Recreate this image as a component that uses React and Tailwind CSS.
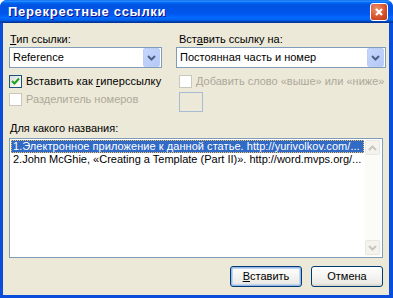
const Checkbox = ({ checked, disabled }) => (
  <div
    className={
      disabled
        ? "w-[13px] h-[13px] border border-[#cac8bb] bg-white shrink-0"
        : "w-[13px] h-[13px] border border-[#1c5180] bg-[linear-gradient(135deg,#dcdcd7,#ffffff)] shrink-0 flex items-center justify-center"
    }
  >
    {checked && (
      <svg width="9" height="9" viewBox="0 0 9 9">
        <path d="M1 4 L3.5 6.5 L8 1.5" stroke="#21a121" strokeWidth="2" fill="none" />
      </svg>
    )}
  </div>
);

const Combo = ({ value, width }) => (
  <div className={`${width} h-[21px] border border-[#7f9db9] bg-white flex items-center`}>
    <span className="flex-1 pl-[3px] whitespace-nowrap overflow-hidden">{value}</span>
    <div className="w-[17px] h-[19px] mr-[1px] rounded-[2px] border border-[#bccdf7] bg-[linear-gradient(135deg,#c6d6fc,#b5c8f7)] flex items-center justify-center">
      <svg width="9" height="6" viewBox="0 0 9 6">
        <path d="M1 1 L4.5 4.5 L8 1" stroke="#4d6185" strokeWidth="2" fill="none" />
      </svg>
    </div>
  </div>
);

const ScrollBtn = ({ up }) => (
  <div className="w-[15px] h-[15px] rounded-[2px] border border-[#e8e8e0] bg-[#f4f3ee] flex items-center justify-center">
    <svg width="9" height="6" viewBox="0 0 9 6">
      <path d={up ? "M1 5 L4.5 1.5 L8 5" : "M1 1 L4.5 4.5 L8 1"} stroke="#c9c7ba" strokeWidth="2" fill="none" />
    </svg>
  </div>
);

export default function App() {
  return (
    <div className="w-[393px] h-[298px] bg-[#0a4ddd] rounded-t-[7px] flex flex-col overflow-hidden font-['Liberation_Sans',Arial,sans-serif] text-[11px] leading-[13px] text-black">
      {/* title bar */}
      <div className="h-[23px] shrink-0 flex items-center justify-between pl-[8px] pr-[5px] bg-[linear-gradient(to_bottom,#0058ee_0%,#3593ff_4%,#288eff_6%,#127dff_8%,#036ffc_10%,#0262ee_14%,#0057e5_20%,#0054e3_24%,#0055eb_56%,#005bf5_66%,#026afe_76%,#0062ef_86%,#0052d6_92%,#0040ab_94%,#003092_100%)]">
        <span className="text-white font-bold text-[13px] tracking-[0.7px] text-shadow-[1px_1px_0_#0f1089]">
          Перекрестные ссылки
        </span>
        <div className="w-[18px] h-[18px] rounded-[3px] border border-white bg-[radial-gradient(circle_at_35%_30%,#f0906c,#d4502a_60%,#b83a14)] flex items-center justify-center">
          <svg width="10" height="10" viewBox="0 0 10 10">
            <path d="M2 2 L8 8 M8 2 L2 8" stroke="white" strokeWidth="2.2" />
          </svg>
        </div>
      </div>

      {/* body */}
      <div className="flex-1 ml-[3px] mr-[4px] mb-[3px] bg-[#ece9d8] flex flex-col pl-[6px] pr-[3px] pt-[10px]">
        <div className="flex gap-[14px]">
          <div className="w-[153px] flex flex-col">
            <span className="pl-[1px]">
              <u>Т</u>ип ссылки:
            </span>
            <div className="mt-[1px]">
              <Combo value="Reference" width="w-[153px]" />
            </div>
            <div className="mt-[7px] flex items-center gap-[4px]">
              <Checkbox checked />
              <span className="whitespace-nowrap tracking-[0.1px]">
                Вставить как <u>г</u>иперссылку
              </span>
            </div>
            <div className="mt-[5px] flex items-center gap-[4px]">
              <Checkbox disabled />
              <span className="whitespace-nowrap text-[#aca899]">Разделитель номеров</span>
            </div>
          </div>
          <div className="w-[210px] flex flex-col">
            <span className="pl-[3px]">
              Вст<u>а</u>вить ссылку на:
            </span>
            <div className="mt-[1px]">
              <Combo value="Постоянная часть и номер" width="w-[210px]" />
            </div>
            <div className="mt-[7px] ml-[3px] flex items-center gap-[4px]">
              <Checkbox disabled />
              <span className="whitespace-nowrap text-[#aca899]">
                Добавить слово «выше» или «ниже»
              </span>
            </div>
            <div className="mt-[4px] ml-[3px] w-[24px] h-[20px] border border-[#a9bad6]"></div>
          </div>
        </div>

        <span className="mt-[10px] pl-[1px]">
          <u>Д</u>ля какого названия:
        </span>
        <div className="mt-[3px] w-[374px] h-[120px] border border-[#7f9db9] bg-white flex p-[1px]">
          <div className="flex-1 flex flex-col min-w-0">
            <div className="h-[13px] bg-[#316ac5] text-white border border-dotted border-[#f4c060] pl-[1px] whitespace-nowrap overflow-hidden leading-[11px] tracking-[0.05px]">
              1.Электронное приложение к данной статье. http://yurivolkov.com/...
            </div>
            <div className="h-[13px] pl-[2px] whitespace-nowrap">
              2.John McGhie, «Creating a Template (Part II)». http://word.mvps.org/...
            </div>
          </div>
          <div className="w-[16px] ml-[1px] bg-[#fbfbf8] flex flex-col justify-between pb-[1px]">
            <ScrollBtn up />
            <ScrollBtn />
          </div>
        </div>

        <div className="mt-[8px] w-[374px] flex justify-end gap-[9px]">
          <button className="w-[72px] h-[21px] rounded-[3px] border border-[#003c74] bg-[linear-gradient(to_bottom,#ffffff,#ecebe6_85%,#d6d0c5)] shadow-[inset_0_0_0_1px_#98b8ea,inset_0_0_0_2px_#c2d6f4]">
            <u>В</u>ставить
          </button>
          <button className="w-[72px] h-[21px] rounded-[3px] border border-[#003c74] bg-[linear-gradient(to_bottom,#ffffff,#ecebe6_85%,#d6d0c5)]">
            Отмена
          </button>
        </div>
      </div>
    </div>
  );
}
